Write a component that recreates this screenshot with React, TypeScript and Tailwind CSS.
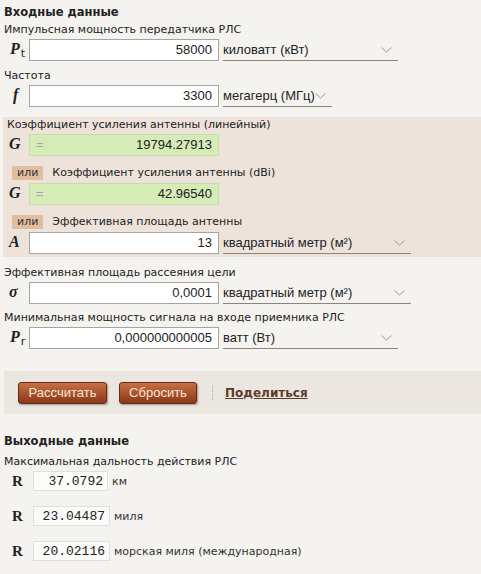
import React from 'react';

const Chevron: React.FC = () => (
  <svg width="11" height="6" viewBox="0 0 11 6" className="shrink-0">
    <path d="M0.5 0.5 L5.5 5 L10.5 0.5" fill="none" stroke="#9a9a9a" strokeWidth="1" />
  </svg>
);

const Sym: React.FC<{ children: React.ReactNode; sub?: string }> = ({ children, sub }) => (
  <span className="font-['Liberation_Serif'] text-[16px] font-bold italic text-[#222] leading-none">
    {children}
    {sub && <span className="not-italic font-normal font-['DejaVu_Sans'] text-[11px] ml-[1px] relative top-[3px]">{sub}</span>}
  </span>
);

const UnitSelect: React.FC<{ label: string; width: string }> = ({ label, width }) => (
  <div className={`${width} h-[22px] ml-[4px] flex items-center justify-between border-b border-[#8f8378] font-['Liberation_Sans'] text-[13px] text-[#222] pr-[6px]`}>
    <span>{label}</span>
    <Chevron />
  </div>
);

const Field: React.FC<{ value: string; green?: boolean }> = ({ value, green }) => (
  <div
    className={
      green
        ? 'w-[190px] h-[22px] flex items-center justify-between bg-[#d5ecb6] border border-[#c6dcaa] px-[6px] font-[\'Liberation_Sans\'] text-[13px] text-[#222]'
        : 'w-[190px] h-[22px] flex items-center justify-end bg-white border border-[#a7a39e] px-[6px] font-[\'Liberation_Sans\'] text-[13px] text-[#222]'
    }
  >
    {green && <span className="text-[#a5a5a5]">=</span>}
    <span>{value}</span>
  </div>
);

const Ili: React.FC = () => (
  <span className="ml-[5px] mr-[9px] px-[5px] h-[14px] leading-[14px] bg-[#e2bea1] text-[#333] text-[11px]">или</span>
);

const OutRow: React.FC<{ value: string; unit: string; w: string; mt: string }> = ({ value, unit, w, mt }) => (
  <div className={`flex items-center h-[20px] leading-none ${mt}`}>
    <span className="w-[29px] pl-[8px] font-['Liberation_Serif'] font-bold text-[15px] text-[#222]">R</span>
    <div className={`${w} h-[20px] flex items-center justify-end pr-[4px] bg-[#fbfbfa] border border-[#e2dfdb] font-['Liberation_Mono'] text-[13px] text-[#222]`}>
      {value}
    </div>
    <span className="ml-[4px] text-[11px] text-[#333]">{unit}</span>
  </div>
);

export default function App() {
  return (
    <div className="min-h-[574px] bg-[#f5f3ef] font-['DejaVu_Sans'] text-[11px] text-[#222] pl-[4px]">
      <div className="h-[22px] leading-[24px] font-bold text-[11.5px]">Входные данные</div>

      <div className="h-[16px] leading-[16px]">Импульсная мощность передатчика РЛС</div>
      <div className="flex items-center mt-px">
        <span className="w-[25px] pl-[6px]"><Sym sub="t">P</Sym></span>
        <Field value="58000" />
        <UnitSelect label="киловатт (кВт)" width="w-[175px]" />
      </div>

      <div className="h-[16px] leading-[16px] mt-[7px]">Частота</div>
      <div className="flex items-center mt-px">
        <span className="w-[25px] pl-[9px]"><Sym>f</Sym></span>
        <Field value="3300" />
        <UnitSelect label="мегагерц (МГц)" width="w-[109px]" />
      </div>

      <div className="mt-[10px] -ml-[1px] bg-[#ede3db] pl-[4px] pb-[3px]">
        <div className="h-[16px] leading-[16px]">Коэффициент усиления антенны (линейный)</div>
        <div className="flex items-center mt-px">
          <span className="w-[22px] pl-[2px]"><Sym>G</Sym></span>
          <Field value="19794.27913" green />
        </div>
        <div className="flex items-center h-[16px] mt-[9px]">
          <Ili />
          <span>Коэффициент усиления антенны (dBi)</span>
        </div>
        <div className="flex items-center mt-[2px]">
          <span className="w-[22px] pl-[2px]"><Sym>G</Sym></span>
          <Field value="42.96540" green />
        </div>
        <div className="flex items-center h-[16px] mt-[9px]">
          <Ili />
          <span>Эффективная площадь антенны</span>
        </div>
        <div className="flex items-center mt-[2px]">
          <span className="w-[22px] pl-[2px]"><Sym>A</Sym></span>
          <Field value="13" />
          <UnitSelect label="квадратный метр (м²)" width="w-[188px]" />
        </div>
      </div>

      <div className="h-[16px] leading-[16px] mt-[8px]">Эффективная площадь рассеяния цели</div>
      <div className="flex items-center mt-px">
        <span className="w-[25px] pl-[5px]"><Sym>σ</Sym></span>
        <Field value="0,0001" />
        <UnitSelect label="квадратный метр (м²)" width="w-[188px]" />
      </div>

      <div className="h-[16px] leading-[16px] mt-[6px]">Минимальная мощность сигнала на входе приемника РЛС</div>
      <div className="flex items-center mt-px">
        <span className="w-[25px] pl-[6px]"><Sym sub="r">P</Sym></span>
        <Field value="0,000000000005" />
        <UnitSelect label="ватт (Вт)" width="w-[175px]" />
      </div>

      <div className="mt-[22px] h-[43px] bg-[#ebe6e0] flex items-center pl-[14px]">
        <button className="h-[22px] w-[89px] rounded-[3px] border border-[#6a2912] bg-gradient-to-b from-[#c96f43] to-[#8a381a] text-[#fbe7d3] font-['Liberation_Sans'] text-[13px] shadow-[1px_1px_2px_rgba(0,0,0,0.35)]">
          Рассчитать
        </button>
        <button className="ml-[12px] h-[22px] w-[78px] rounded-[3px] border border-[#6a2912] bg-gradient-to-b from-[#c96f43] to-[#8a381a] text-[#fbe7d3] font-['Liberation_Sans'] text-[13px] shadow-[1px_1px_2px_rgba(0,0,0,0.35)]">
          Сбросить
        </button>
        <span className="ml-[15px] h-[15px] border-l border-dotted border-[#aaa]" />
        <a className="ml-[12px] font-bold text-[12px] text-[#5c3b2a] underline">Поделиться</a>
      </div>

      <div className="mt-[19px] h-[16px] leading-[16px] font-bold text-[11.5px]">Выходные данные</div>
      <div className="mt-[5px] h-[16px] leading-[16px]">Максимальная дальность действия РЛС</div>
      <OutRow value="37.0792" unit="км" w="w-[75px]" mt="mt-px" />
      <OutRow value="23.04487" unit="миля" w="w-[77px]" mt="mt-[15px]" />
      <OutRow value="20.02116" unit="морская миля (международная)" w="w-[77px]" mt="mt-[15px]" />
    </div>
  );
}
